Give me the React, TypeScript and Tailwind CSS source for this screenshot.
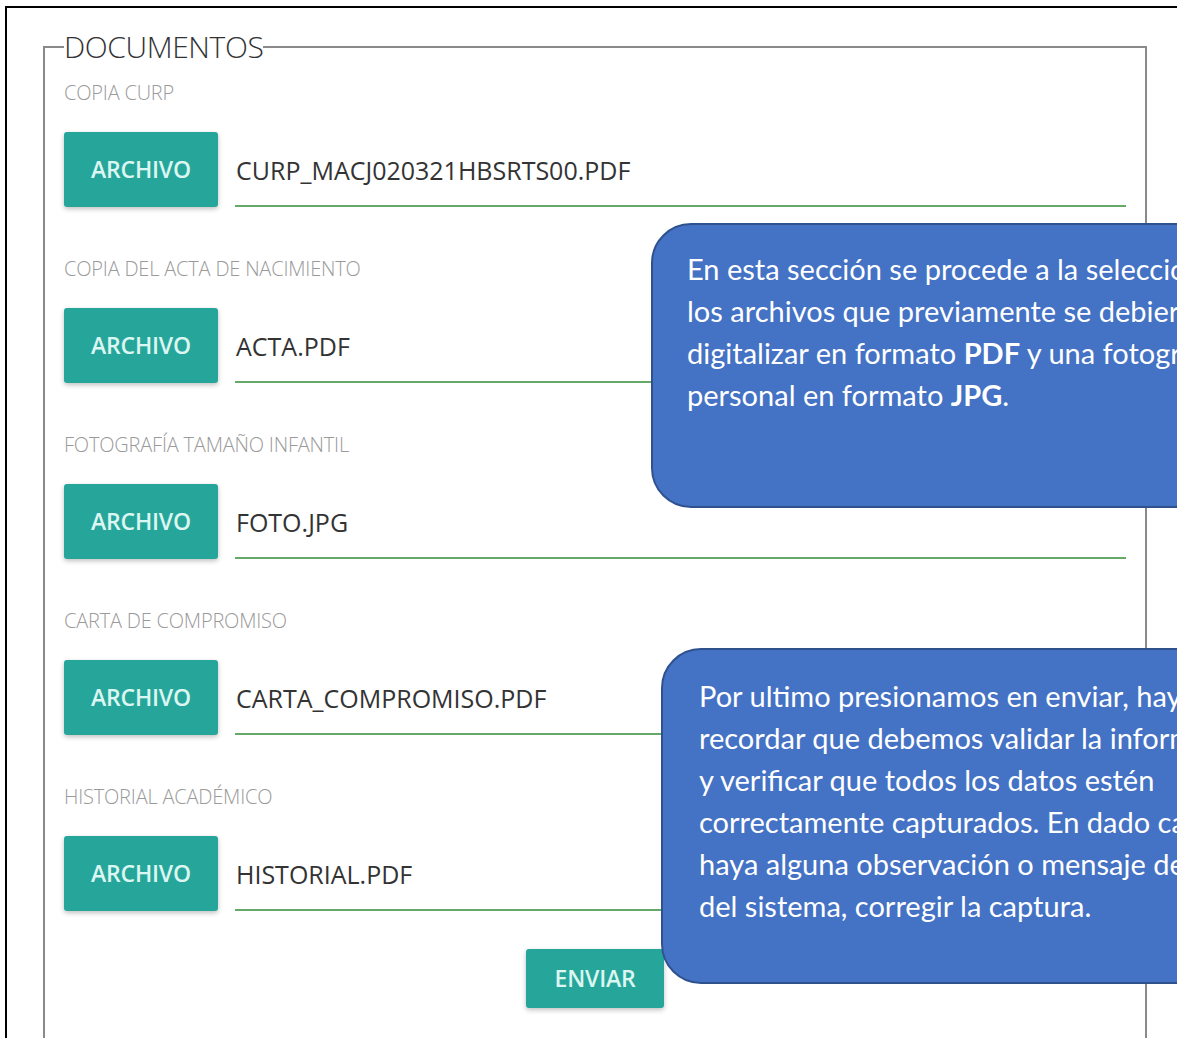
import React from "react";

const campos = [
  { label: "COPIA CURP", archivo: "CURP_MACJ020321HBSRTS00.PDF" },
  { label: "COPIA DEL ACTA DE NACIMIENTO", archivo: "ACTA.PDF" },
  { label: "FOTOGRAFÍA TAMAÑO INFANTIL", archivo: "FOTO.JPG" },
  { label: "CARTA DE COMPROMISO", archivo: "CARTA_COMPROMISO.PDF" },
  { label: "HISTORIAL ACADÉMICO", archivo: "HISTORIAL.PDF" },
];

const uiFont = { fontFamily: '"Open Sans", "Noto Sans", sans-serif' };
const noteFont = { fontFamily: 'Lato, "Noto Sans", sans-serif' };

function CampoArchivo({ label, archivo }: { label: string; archivo: string }) {
  return (
    <div className="flex flex-col">
      <label className="h-6 pt-[2px] text-[20px] leading-6 font-light text-[#9a9a9a] tracking-[-0.2px]">
        {label}
      </label>
      <div className="mt-[29px] mb-[48px] flex items-end">
        <button
          type="button"
          className="h-[75px] w-[154px] shrink-0 rounded-[3px] bg-[#26a69a] text-[23px] font-semibold text-[#dcf6f2] tracking-[-0.2px] shadow-[0_2px_5px_rgba(0,0,0,0.25)]"
        >
          ARCHIVO
        </button>
        <div className="ml-[17px] flex h-[75px] flex-1 items-center border-b-2 border-[#66a866] pl-[1px] pt-[4px]">
          <span className="text-[25px] text-[#333]">{archivo}</span>
        </div>
      </div>
    </div>
  );
}

export default function App() {
  return (
    <div className="relative h-[1038px] w-[1177px] overflow-hidden bg-white" style={uiFont}>
      <div className="ml-[5px] mt-[6px] h-[1100px] w-[1250px] border-2 border-black pl-[36px] pt-[21px]">
        <fieldset className="w-[1104px] border-2 border-[#8a8a8a] px-[19px] pb-10">
          <legend className="text-[30px] leading-9 font-light text-[#333] tracking-[-0.4px]">
            DOCUMENTOS
          </legend>
          <div className="pt-[14px]">
            {campos.map((c) => (
              <CampoArchivo key={c.label} label={c.label} archivo={c.archivo} />
            ))}
          </div>
          <div className="-mt-[10px] flex justify-center">
            <button
              type="button"
              className="h-[59px] w-[138px] rounded-[3px] bg-[#26a69a] text-[23px] font-semibold text-[#dcf6f2] tracking-[-0.2px] shadow-[0_2px_5px_rgba(0,0,0,0.25)]"
            >
              ENVIAR
            </button>
          </div>
        </fieldset>
      </div>

      {/* notas sobre el formulario */}
      <div
        className="absolute left-[651px] top-[223px] h-[285px] w-[700px] rounded-[40px] border-2 border-[#2f528f] bg-[#4472c4] pl-[34px] pt-[23px] text-[29px] leading-[42px] text-white whitespace-nowrap"
        style={noteFont}
      >
        <div>En esta sección se procede a la selección de</div>
        <div>los archivos que previamente se debieron</div>
        <div>
          digitalizar en formato <b>PDF</b> y una fotografía
        </div>
        <div>
          personal en formato <b>JPG</b>.
        </div>
      </div>

      <div
        className="absolute left-[661px] top-[648px] h-[336px] w-[700px] rounded-[40px] border-2 border-[#2f528f] bg-[#4472c4] pl-[36px] pt-[25px] text-[29px] leading-[42px] text-white whitespace-nowrap"
        style={noteFont}
      >
        <div>Por ultimo presionamos en enviar, hay que</div>
        <div>recordar que debemos validar la información</div>
        <div>y verificar que todos los datos estén</div>
        <div>correctamente capturados. En dado caso que</div>
        <div>haya alguna observación o mensaje de error</div>
        <div>del sistema, corregir la captura.</div>
      </div>
    </div>
  );
}
